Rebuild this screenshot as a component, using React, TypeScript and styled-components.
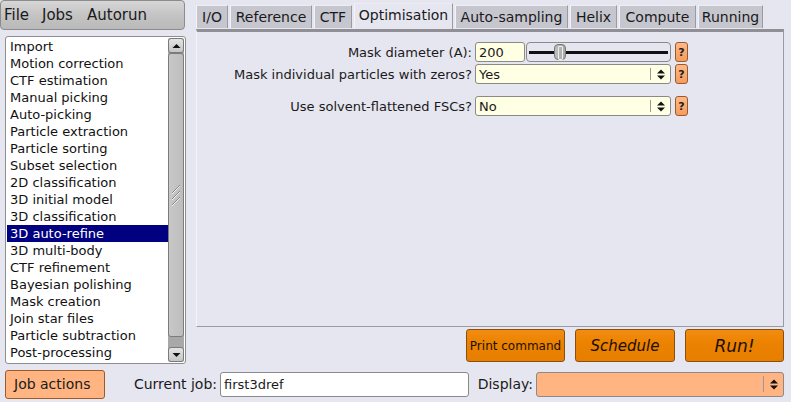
import React from "react";
import styled, { createGlobalStyle } from "styled-components";

const Global = createGlobalStyle`
  html, body { margin: 0; padding: 0; background: #e6e6f0; }
  body { font-family: "DejaVu Sans", "Liberation Sans", sans-serif; font-size: 13px; color: #1a1a1a; }
  * { box-sizing: border-box; }
`;

const Root = styled.div`
  width: 791px;
  height: 402px;
  background: #e6e6f0;
  display: flex;
  flex-direction: column;
  overflow: hidden;
`;

const Top = styled.div`
  display: flex;
  height: 366px;
`;

const LeftCol = styled.div`
  width: 190px;
  display: flex;
  flex-direction: column;
`;

const MenuBar = styled.div`
  width: 185px;
  height: 30px;
  display: flex;
  align-items: center;
  padding-left: 3px;
  border: 1px solid #8c8c8c;
  border-radius: 4px;
  background: linear-gradient(#d6d6d6, #c4c4c4 50%, #b9b9b9);
  font-size: 15px;
`;

const MenuItem = styled.span<{ $w: number }>`
  width: ${(p) => p.$w}px;
`;

const ListBox = styled.div`
  margin: 6px 0 0 5px;
  width: 181px;
  height: 328px;
  border: 1px solid #8e8e8e;
  border-radius: 3px;
  background: #fff;
  display: flex;
  padding: 1px;
`;

const Items = styled.div`
  flex: 1;
  display: flex;
  flex-direction: column;
`;

const Item = styled.div<{ $sel?: boolean }>`
  height: 17px;
  line-height: 17px;
  padding-left: 3px;
  white-space: nowrap;
  background: ${(p) => (p.$sel ? "#000080" : "transparent")};
  color: ${(p) => (p.$sel ? "#fff" : "#111")};
`;

const ScrollBar = styled.div`
  width: 16px;
  display: flex;
  flex-direction: column;
  background: #a8a8a8;
  border-radius: 2px;
`;

const ScrollBtn = styled.div`
  height: 15px;
  border: 1px solid #7a7a7a;
  border-radius: 3px;
  background: linear-gradient(#e4e4e4, #c6c6c6);
  display: flex;
  align-items: center;
  justify-content: center;
`;

const Thumb = styled.div`
  height: 284px;
  border: 1px solid #7c7c7c;
  border-radius: 3px;
  background: linear-gradient(90deg, #c8c8c8, #bdbdbd);
  display: flex;
  align-items: center;
  justify-content: center;
`;

const Track = styled.div`
  flex: 1;
`;

const RightCol = styled.div`
  flex: 1;
  padding: 0 7px 0 6px;
  display: flex;
  flex-direction: column;
`;

const TabBar = styled.div`
  height: 29px;
  display: flex;
  align-items: flex-end;
  gap: 2px;
`;

const Tab = styled.div<{ $active?: boolean; $w: number }>`
  width: ${(p) => p.$w}px;
  height: ${(p) => (p.$active ? 26 : 23)}px;
  margin-bottom: ${(p) => (p.$active ? 0 : 1)}px;
  display: flex;
  align-items: center;
  justify-content: center;
  font-size: 14px;
  white-space: nowrap;
  background: ${(p) => (p.$active ? "#e6e6f0" : "#c6c6cf")};
  border-right: 1px solid #9a9aa2;
  border-left: 1px solid #f2f2f8;
  border-top: 1px solid #ededf4;
  padding-bottom: ${(p) => (p.$active ? 3 : 0)}px;
`;

const Panel = styled.div`
  height: 298px;
  border-top: 3px solid #8f8f95;
  border-right: 1px solid #9a9aa2;
  border-bottom: 1px solid #9a9aa2;
  border-left: 1px solid #f4f4f9;
  padding-top: 10px;
  display: flex;
  flex-direction: column;
`;

const FormRow = styled.div<{ $gap?: number }>`
  display: grid;
  grid-template-columns: 275px 196px 13px;
  column-gap: 3px;
  height: 20px;
  margin-top: ${(p) => p.$gap ?? 0}px;
  align-items: center;
`;

const Label = styled.div`
  text-align: right;
  white-space: nowrap;
`;

const Controls = styled.div`
  display: flex;
  height: 20px;
  gap: 1px;
`;

const Input = styled.div<{ $w?: number; $bg?: string }>`
  width: ${(p) => (p.$w ? `${p.$w}px` : "100%")};
  height: 100%;
  border: 1px solid #8a8a8a;
  border-radius: 3px;
  background: ${(p) => p.$bg ?? "#ffffe4"};
  padding-left: 3px;
  display: flex;
  align-items: center;
  white-space: nowrap;
`;

const Slider = styled.div`
  flex: 1;
  height: 100%;
  border: 1px solid #8a8a8a;
  border-radius: 4px;
  position: relative;
  display: flex;
  align-items: center;
  padding: 0 2px;
`;

const SliderLine = styled.div`
  flex: 1;
  height: 3px;
  background: #111;
`;

const Knob = styled.div`
  position: absolute;
  left: 27px;
  top: 1px;
  width: 12px;
  height: 16px;
  border: 1px solid #777;
  border-radius: 4px;
  background: linear-gradient(90deg, #bdbdbd, #a9a9a9);
  display: flex;
  justify-content: center;
  &::after {
    content: "";
    width: 3px;
    margin-top: 1px;
    height: 12px;
    border: 1px solid #eee;
    border-radius: 1px;
  }
`;

const Select = styled.div<{ $bg?: string }>`
  width: 100%;
  height: 100%;
  border: 1px solid #8a8a8a;
  border-radius: 3px;
  background: ${(p) => p.$bg ?? "#ffffe4"};
  display: flex;
  align-items: center;
`;

const SelectText = styled.div`
  flex: 1;
  padding-left: 3px;
`;

const SelectArrow = styled.div`
  width: 20px;
  height: 70%;
  border-left: 1px solid #9a9a9a;
  display: flex;
  align-items: center;
  justify-content: center;
`;

const Help = styled.div`
  width: 13px;
  height: 20px;
  margin-left: 1px;
  border: 1px solid #9a5a2a;
  border-radius: 3px;
  background: linear-gradient(#ffb987, #f59c5c);
  font-size: 11px;
  font-weight: bold;
  display: flex;
  align-items: center;
  justify-content: center;
  color: #222;
`;

const ActionRow = styled.div`
  display: flex;
  justify-content: flex-end;
  gap: 10px;
  margin-top: 2px;
  height: 33px;
`;

const ActionBtn = styled.div<{ $w: number; $size: number; $italic?: boolean }>`
  width: ${(p) => p.$w}px;
  height: 33px;
  border: 1px solid #8a4f0e;
  border-radius: 3px;
  background: linear-gradient(#f28d12, #ec8200 40%, #e67e00);
  display: flex;
  align-items: center;
  justify-content: center;
  font-size: ${(p) => p.$size}px;
  font-style: ${(p) => (p.$italic ? "italic" : "normal")};
  color: #1a1000;
  white-space: nowrap;
`;

const Bottom = styled.div`
  display: flex;
  align-items: center;
  height: 36px;
  padding: 0 7px 0 5px;
`;

const JobActions = styled.div`
  width: 100px;
  height: 29px;
  border: 1px solid #9a5a2a;
  border-radius: 3px;
  background: #ffb482;
  font-size: 14px;
  display: flex;
  align-items: center;
  padding-left: 8px;
  white-space: nowrap;
`;

const BottomLabel = styled.div<{ $w: number }>`
  width: ${(p) => p.$w}px;
  padding-right: 3px;
  text-align: right;
  font-size: 14px;
  white-space: nowrap;
`;

const BottomField = styled.div<{ $w: number }>`
  width: ${(p) => p.$w}px;
  height: 25px;
`;

const UpDown = () => (
  <svg width="8" height="11" viewBox="0 0 8 11">
    <path d="M0 4.5 L4 0.5 L8 4.5 Z M0 6.5 L4 10.5 L8 6.5 Z" fill="#111" />
  </svg>
);

const ArrowUp = () => (
  <svg width="9" height="6" viewBox="0 0 9 6">
    <path d="M0.5 5 L4.5 1 L8.5 5 Z" fill="#111" />
  </svg>
);
const ArrowDown = () => (
  <svg width="9" height="6" viewBox="0 0 9 6">
    <path d="M0.5 1 L4.5 5 L8.5 1 Z" fill="#111" />
  </svg>
);

const Grip = () => (
  <svg width="10" height="22" viewBox="0 0 10 22">
    <path d="M1 9 L9 1 M1 15 L9 7 M1 21 L9 13" stroke="#888" strokeWidth="1" />
    <path d="M1 10 L9 2 M1 16 L9 8 M1 22 L9 14" stroke="#eee" strokeWidth="1" />
  </svg>
);

const jobs = [
  "Import",
  "Motion correction",
  "CTF estimation",
  "Manual picking",
  "Auto-picking",
  "Particle extraction",
  "Particle sorting",
  "Subset selection",
  "2D classification",
  "3D initial model",
  "3D classification",
  "3D auto-refine",
  "3D multi-body",
  "CTF refinement",
  "Bayesian polishing",
  "Mask creation",
  "Join star files",
  "Particle subtraction",
  "Post-processing",
];

const tabs: [string, number][] = [
  ["I/O", 32],
  ["Reference", 82],
  ["CTF", 38],
  ["Optimisation", 99],
  ["Auto-sampling", 113],
  ["Helix", 47],
  ["Compute", 77],
  ["Running", 65],
];

export default function App() {
  return (
    <Root>
      <Global />
      <Top>
        <LeftCol>
          <MenuBar>
            <MenuItem $w={38}>File</MenuItem>
            <MenuItem $w={45}>Jobs</MenuItem>
            <MenuItem $w={66}>Autorun</MenuItem>
          </MenuBar>
          <ListBox>
            <Items>
              {jobs.map((j) => (
                <Item key={j} $sel={j === "3D auto-refine"}>
                  {j}
                </Item>
              ))}
            </Items>
            <ScrollBar>
              <ScrollBtn>
                <ArrowUp />
              </ScrollBtn>
              <Thumb>
                <Grip />
              </Thumb>
              <Track />
              <ScrollBtn>
                <ArrowDown />
              </ScrollBtn>
            </ScrollBar>
          </ListBox>
        </LeftCol>
        <RightCol>
          <TabBar>
            {tabs.map(([t, w]) => (
              <Tab key={t} $w={w} $active={t === "Optimisation"}>
                {t}
              </Tab>
            ))}
          </TabBar>
          <Panel>
            <FormRow>
              <Label>Mask diameter (A):</Label>
              <Controls>
                <Input $w={50}>200</Input>
                <Slider>
                  <SliderLine />
                  <Knob />
                </Slider>
              </Controls>
              <Help>?</Help>
            </FormRow>
            <FormRow $gap={2}>
              <Label>Mask individual particles with zeros?</Label>
              <Select>
                <SelectText>Yes</SelectText>
                <SelectArrow>
                  <UpDown />
                </SelectArrow>
              </Select>
              <Help>?</Help>
            </FormRow>
            <FormRow $gap={12}>
              <Label>Use solvent-flattened FSCs?</Label>
              <Select>
                <SelectText>No</SelectText>
                <SelectArrow>
                  <UpDown />
                </SelectArrow>
              </Select>
              <Help>?</Help>
            </FormRow>
          </Panel>
          <ActionRow>
            <ActionBtn $w={99} $size={12}>Print command</ActionBtn>
            <ActionBtn $w={100} $size={15} $italic>Schedule</ActionBtn>
            <ActionBtn $w={99} $size={17} $italic>Run!</ActionBtn>
          </ActionRow>
        </RightCol>
      </Top>
      <Bottom>
        <JobActions>Job actions</JobActions>
        <BottomLabel $w={115}>Current job:</BottomLabel>
        <BottomField $w={249}>
          <Input $bg="#ffffff">first3dref</Input>
        </BottomField>
        <BottomLabel $w={67}>Display:</BottomLabel>
        <BottomField $w={248}>
          <Select $bg="#ffb482">
            <SelectText />
            <SelectArrow>
              <UpDown />
            </SelectArrow>
          </Select>
        </BottomField>
      </Bottom>
    </Root>
  );
}
